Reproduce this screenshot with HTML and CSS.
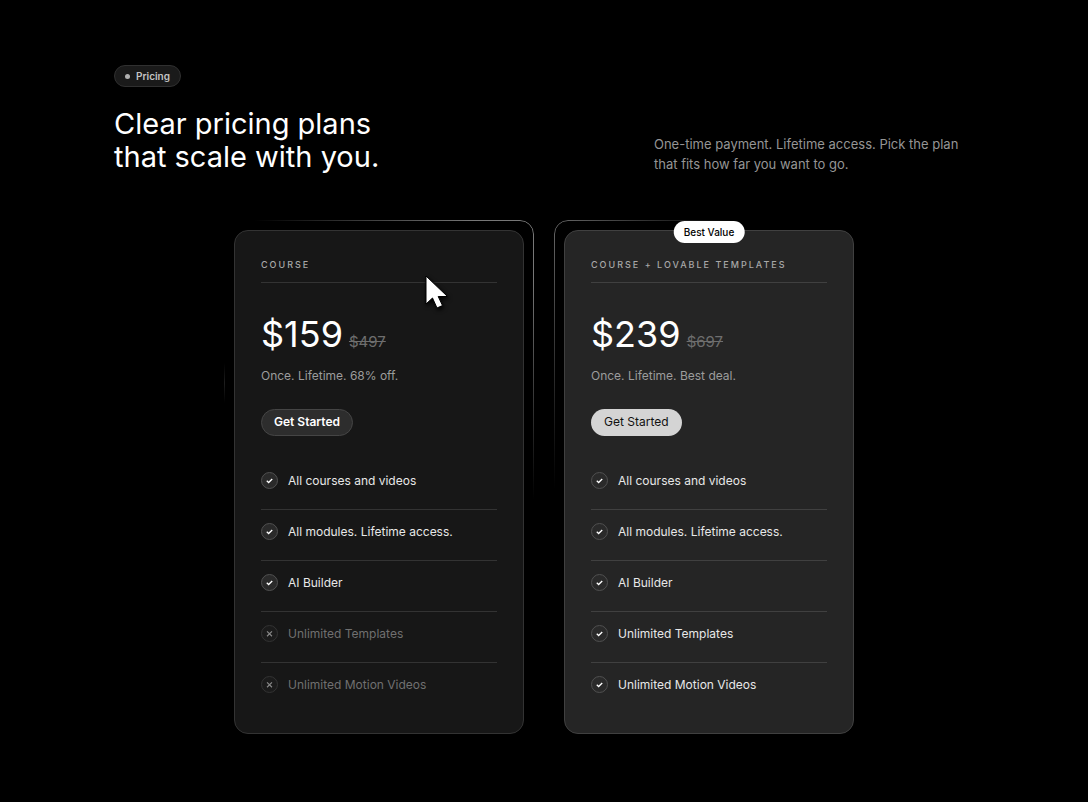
FILE: index.html
```html
<!DOCTYPE html>
<html lang="en">
<head>
    <meta charset="UTF-8">
    <meta name="viewport" content="width=device-width, initial-scale=1.0">
    <title>Pricing</title>
    <link rel="stylesheet" href="styles.css">
</head>
<body>
    <svg class="sprite" aria-hidden="true">
        <symbol id="check" viewBox="0 0 17 17">
            <path d="M5.4 8.9 L7.5 10.8 L11.6 6.8" fill="none" stroke="currentColor" stroke-width="1.5"/>
        </symbol>
        <symbol id="cross" viewBox="0 0 17 17">
            <path d="M5.7 6 L11.3 11.6 M11.3 6 L5.7 11.6" fill="none" stroke="currentColor" stroke-width="1.3"/>
        </symbol>
    </svg>

    <main class="pricing">
        <header class="intro">
            <div>
                <span class="tag">Pricing</span>
                <h1>Clear pricing plans<br>that scale with you.</h1>
            </div>
            <p class="lead">One-time payment. Lifetime access. Pick the plan that fits how far you want to go.</p>
        </header>

        <div class="plans">
            <section class="plan glow-right">
                <h2>Course</h2>
                <div class="price">$159 <s>$497</s></div>
                <p class="note">Once. Lifetime. 68% off.</p>
                <button type="button" class="btn btn-dark">Get Started</button>
                <ul class="features">
                    <li><svg class="icon"><use href="#check"/></svg>All courses and videos</li>
                    <li><svg class="icon"><use href="#check"/></svg>All modules. Lifetime access.</li>
                    <li><svg class="icon"><use href="#check"/></svg>AI Builder</li>
                    <li class="off"><svg class="icon"><use href="#cross"/></svg>Unlimited Templates</li>
                    <li class="off"><svg class="icon"><use href="#cross"/></svg>Unlimited Motion Videos</li>
                </ul>
                <svg class="cursor" viewBox="0 0 24 34" aria-hidden="true">
                    <path d="M1 1 V29 L7.5 23 L12 33 L17.5 30.5 L13.2 21.5 H22.5 Z" fill="#fff" stroke="#000" stroke-width="1"/>
                </svg>
            </section>

            <section class="plan best glow-left">
                <span class="ribbon">Best Value</span>
                <h2>Course + Lovable Templates</h2>
                <div class="price">$239 <s>$697</s></div>
                <p class="note">Once. Lifetime. Best deal.</p>
                <button type="button" class="btn btn-light">Get Started</button>
                <ul class="features">
                    <li><svg class="icon"><use href="#check"/></svg>All courses and videos</li>
                    <li><svg class="icon"><use href="#check"/></svg>All modules. Lifetime access.</li>
                    <li><svg class="icon"><use href="#check"/></svg>AI Builder</li>
                    <li><svg class="icon"><use href="#check"/></svg>Unlimited Templates</li>
                    <li><svg class="icon"><use href="#check"/></svg>Unlimited Motion Videos</li>
                </ul>
            </section>
        </div>
    </main>
</body>
</html>
```
FILE: styles.css
```css
* {
    box-sizing: border-box;
}

body {
    margin: 0;
    background-color: #000;
    color: #fff;
    font-family: Inter, sans-serif;
    font-size: 12px;
}

h1, h2, p, ul {
    margin: 0;
    padding: 0;
}

.sprite {
    display: none;
}

.pricing {
    max-width: 900px;
    margin: 0 auto;
    padding: 65px 20px;
}

.intro {
    display: flex;
    justify-content: space-between;
    align-items: flex-end;
}

.tag {
    display: inline-flex;
    align-items: center;
    gap: 6px;
    height: 22px;
    padding: 0 10px;
    border: 1px solid #303030;
    border-radius: 11px;
    background-color: #1a1a1a;
    color: #c4c4c4;
    font-size: 10px;
    font-weight: 600;
}

.tag::before {
    content: "";
    width: 5px;
    height: 5px;
    border-radius: 50%;
    background-color: #b0b0b0;
}

h1 {
    margin-top: 20px;
    padding-bottom: 1px;
    font-size: 29px;
    font-weight: 400;
    line-height: 33px;
}

.lead {
    width: 320px;
    color: #959595;
    font-size: 13px;
    line-height: 20px;
}

.plans {
    display: flex;
    justify-content: center;
    gap: 40px;
    margin-top: 56px;
}

.plan {
    position: relative;
    flex: 0 1 290px;
    padding: 26px 26px 20px;
    border: 1px solid #333;
    border-radius: 14px;
    background-color: #171717;
}

.plan.best {
    border-color: #404040;
    background-color: #252525;
}

/* thin light line that fades out around the card */
.plan::before {
    content: "";
    position: absolute;
    inset: -11px;
    border: 1px solid #777;
    border-radius: 14px;
    pointer-events: none;
}

.glow-right::before {
    -webkit-mask-image: radial-gradient(circle at 100% 0, #000 10%, transparent 280px), radial-gradient(circle at 0 163px, rgba(0, 0, 0, 0.25), transparent 20px);
    mask-image: radial-gradient(circle at 100% 0, #000 10%, transparent 280px), radial-gradient(circle at 0 163px, rgba(0, 0, 0, 0.25), transparent 20px);
}

.plan.glow-left::before {
    border-color: #666;
    -webkit-mask-image: radial-gradient(ellipse 180px 270px at 0 0, #000, transparent);
    mask-image: radial-gradient(ellipse 180px 270px at 0 0, #000, transparent);
}

.ribbon {
    position: absolute;
    top: -10px;
    left: 50%;
    transform: translateX(-50%);
    padding: 0 10px;
    border-radius: 11px;
    background-color: #fff;
    color: #000;
    font-size: 10px;
    font-weight: 500;
    line-height: 22px;
    white-space: nowrap;
}

h2 {
    padding-bottom: 9px;
    border-bottom: 1px solid #333;
    color: #a8a8a8;
    font-size: 9px;
    font-weight: 500;
    line-height: 16px;
    letter-spacing: 2px;
    text-transform: uppercase;
}

.best h2,
.best .features li {
    border-color: #404040;
}

.price {
    display: flex;
    align-items: baseline;
    gap: 6px;
    margin-top: 30px;
    font-size: 36px;
    line-height: 42px;
}

.price s {
    color: #6e6e6e;
    font-size: 15px;
}

.note {
    margin-top: 5px;
    color: #9c9c9c;
    line-height: 16px;
}

.btn {
    display: block;
    height: 27px;
    margin-top: 25px;
    padding: 0 12px 3px;
    border: 1px solid transparent;
    border-radius: 14px;
    font-family: inherit;
    font-size: 12px;
    cursor: pointer;
}

.btn-dark {
    border-color: #454545;
    background-color: #2d2d2d;
    color: #fff;
    font-weight: 600;
}

.btn-light {
    background-color: #d4d4d4;
    color: #111;
}

.features {
    margin-top: 23px;
    list-style: none;
}

.features li {
    display: flex;
    gap: 10px;
    padding: 13px 0 20px;
    border-bottom: 1px solid #333;
    color: #e8e8e8;
    line-height: 17px;
}

.features li:last-child {
    border-bottom: none;
}

.icon {
    width: 17px;
    height: 17px;
    border: 1px solid #505050;
    border-radius: 50%;
    background-color: #2a2a2a;
    color: #fff;
}

.features .off {
    color: #707070;
}

.off .icon {
    border-color: #333;
    background-color: #1b1b1b;
    color: #8a8a8a;
}

.cursor {
    position: absolute;
    top: 44px;
    left: 190px;
    width: 24px;
    height: 34px;
    filter: drop-shadow(1px 2px 2px #000);
}
```
